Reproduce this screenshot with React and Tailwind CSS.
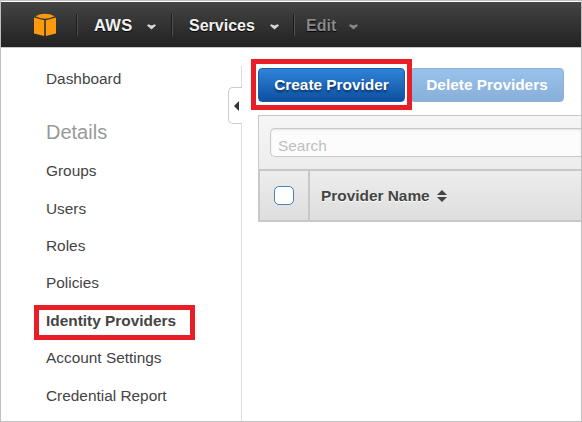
const NAV_ITEMS = ['Groups', 'Users', 'Roles', 'Policies', 'Identity Providers', 'Account Settings', 'Credential Report'];

function Chevron({ className }) {
  return (
    <svg className={`mt-[4px] shrink-0 ${className}`} width="9" height="6" viewBox="0 0 9 6">
      <path d="M0 1.5 L1.2 0.2 L4.5 1.6 L7.8 0.2 L9 1.5 L4.5 5.4 Z" fill="currentColor" />
    </svg>
  );
}

function Divider({ className }) {
  return <div className={`h-[22px] w-[2px] border-l border-[#1b1b1b] bg-[#505050] ${className}`} />;
}

function Header() {
  return (
    <header className="mt-px flex h-[46px] shrink-0 items-center border-b border-[#c8c8c8] bg-linear-to-b from-[#444444] to-[#222222] font-bold text-[#f2f2f2]">
      <svg className="mt-px ml-8 shrink-0" width="24" height="24" viewBox="0 0 24 24" fill="#fd9a0c">
        <path d="M2.4 3.2 Q7 0.8 12 0.8 Q17 0.8 21.6 3.2 Q17 5.6 12 5.8 Q7 5.6 2.4 3.2 Z" />
        <path d="M1 4.4 L11.2 7.2 V23 L1 20.6 Z" />
        <path d="M23 4.4 L12.8 7.2 V23 L23 20.6 Z" />
      </svg>
      <Divider className="ml-[19px]" />
      <div className="ml-[16px] flex w-[77px] items-center">
        <span className="w-[53px] pt-[2px] text-[16.5px] tracking-[0.3px] [text-shadow:0_1px_1px_#000]">AWS</span>
        <Chevron className="text-[#d5d5d5]" />
      </div>
      <Divider className="" />
      <div className="ml-[16px] flex w-[104px] items-center">
        <span className="w-[81px] pt-[2px] text-base [text-shadow:0_1px_1px_#000]">Services</span>
        <Chevron className="text-[#d5d5d5]" />
      </div>
      <Divider className="" />
      <div className="ml-[11px] flex items-center text-[#898989]">
        <span className="w-[43px] pt-[2px] text-base [text-shadow:0_1px_1px_#000]">Edit</span>
        <Chevron className="" />
      </div>
    </header>
  );
}

function Sidebar() {
  return (
    <aside className="relative w-[241px] shrink-0">
      <nav className="flex flex-col pt-[21px] pl-[45px] text-[15.4px] leading-5 text-[#444444]">
        <span>Dashboard</span>
        <h2 className="mt-[31px] mb-[17px] text-[20px] leading-6 text-[#999999]">Details</h2>
        {NAV_ITEMS.map((item) => (
          <div key={item} className="flex h-[37.5px] items-start">
            {item === 'Identity Providers' ? (
              <span className="relative font-bold whitespace-nowrap">
                {item}
                <span className="absolute -top-[6px] -left-[12px] h-[35px] w-[161px] border-[5px] border-[#e91d25]" />
              </span>
            ) : (
              <span className={item === 'Policies' || item === 'Account Settings' ? '-mt-px' : ''}>{item}</span>
            )}
          </div>
        ))}
      </nav>
      <div className="absolute top-[18px] right-0 bottom-0 w-px bg-[#dddddd]" />
      <div className="absolute top-[39px] right-0 flex h-[37px] w-[14px] items-center rounded-l-[5px] border border-r-0 border-[#cccccc] bg-white pl-[5px]">
        <svg width="5" height="10" viewBox="0 0 5 10">
          <path d="M5 0 V10 L0 5 Z" fill="#333333" />
        </svg>
      </div>
    </aside>
  );
}

function Toolbar() {
  return (
    <div className="flex h-[34px] font-bold text-white">
      <button className="relative h-[34px] w-[147px] rounded-[4px] border border-[#1c5ca0] bg-linear-to-b from-[#2f84da] to-[#0d50a0] text-[15.4px] leading-8 whitespace-nowrap [text-shadow:0_2px_2px_#0a3363]">
        Create Provider
        <span className="absolute -top-[10px] -left-[8px] h-[51px] w-[161px] border-[5px] border-[#e91d25]" />
      </button>
      <button className="ml-[5px] h-[34px] w-[154px] rounded-[4px] border border-[#8fb1d4] bg-linear-to-b from-[#98c2ec] to-[#88afd8] text-[15.4px] leading-8 whitespace-nowrap">
        Delete Providers
      </button>
    </div>
  );
}

function ProviderTable() {
  return (
    <section className="mt-[13px] flex h-[107px] flex-col border-t border-l border-[#c8c8c8]">
      <div className="h-[53px] bg-linear-to-b from-[#f6f6f6] to-[#ececec] pt-[12px] pl-[11px]">
        <div className="h-[29px] rounded-l-[5px] border border-r-0 border-[#c8c8c8] bg-[#fcfcfc] pl-[7px] text-[15.4px] leading-[34px] text-[#bfbfbf] shadow-[inset_0_1px_2px_#e4e4e4]">
          Search
        </div>
      </div>
      <div className="flex h-[53px] border-y-2 border-l border-[#c8c8c8] bg-linear-to-b from-[#ededed] to-[#dedede]">
        <div className="flex w-[50px] items-center border-r-2 border-[#c8c8c8] pl-[14px]">
          <span className="h-[19px] w-5 rounded-[5px] border border-[#4a83b5] bg-white" />
        </div>
        <div className="flex items-center pl-[11px] text-[#444444]">
          <span className="w-[116px] pt-px text-[15.4px] font-bold whitespace-nowrap [text-shadow:0_1px_0_#fff]">Provider Name</span>
          <svg width="10" height="12" viewBox="0 0 10 12" fill="#444444">
            <path d="M5 0 L10 5 H0 Z" />
            <path d="M5 12 L10 7 H0 Z" />
          </svg>
        </div>
      </div>
    </section>
  );
}

export default function App() {
  return (
    <div className="flex h-[422px] w-[582px] flex-col overflow-hidden border border-[#bfbfbf] bg-white font-['Liberation_Sans',Arial,sans-serif]">
      <Header />
      <div className="flex min-h-0 flex-1">
        <Sidebar />
        <main className="min-w-0 flex-1 pt-[20px] pl-[16px]">
          <Toolbar />
          <ProviderTable />
        </main>
      </div>
    </div>
  );
}
